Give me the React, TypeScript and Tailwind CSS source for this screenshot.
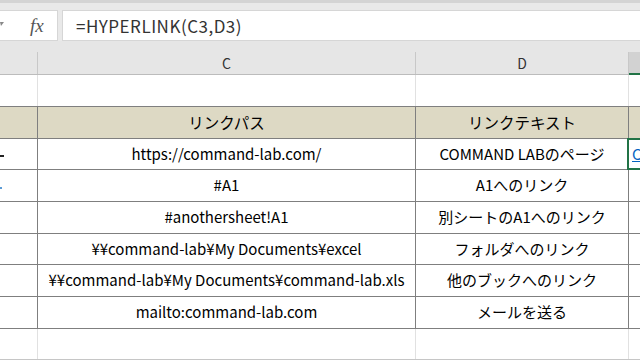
import React from "react";

const jp = "font-['Noto_Sans_CJK_JP',sans-serif]";

const rows = [
  { c: "https://command-lab.com/", d: "COMMAND LABのページ", h: "h-[31px]", mark: "dash", sel: true },
  { c: "#A1", d: "A1へのリンク", h: "h-[32px]", mark: "blue" },
  { c: "#anothersheet!A1", d: "別シートのA1へのリンク", h: "h-[32px]" },
  { c: "¥¥command-lab¥My Documents¥excel", d: "フォルダへのリンク", h: "h-[31px]" },
  { c: "¥¥command-lab¥My Documents¥command-lab.xls", d: "他のブックへのリンク", h: "h-[32px]" },
  { c: "mailto:command-lab.com", d: "メールを送る", h: "h-[32px]" },
];

export default function App() {
  return (
    <div className={`w-[640px] h-[360px] overflow-hidden bg-white ${jp} text-black`}>
      <div className="h-[3px] bg-[#d4d4d4]" />
      {/* formula bar */}
      <div className="h-[38px] bg-[#e9e9e9] flex items-start pt-[7px]">
        <div className="w-[58px] h-[31px] bg-white border border-l-0 border-[#d6d6d6] flex items-center">
          <svg width="4" height="6" viewBox="0 0 4 6" className="mt-[-4px]">
            <path d="M0 1 L4 1 L1 5 Z" fill="#888" />
          </svg>
          <span className="ml-[26px] font-['Liberation_Serif',serif] italic text-[19px] text-[#555] leading-none">
            fx
          </span>
        </div>
        <div className="ml-[4px] flex-1 h-[31px] bg-white border border-r-0 border-[#d6d6d6] flex items-center pl-[13px]">
          <span className="text-[17px] text-[#333] tracking-[0.5px]">=HYPERLINK(C3,D3)</span>
        </div>
      </div>
      <div className="h-[11px] bg-[#e6e6e6]" />
      {/* column headers */}
      <div className="flex h-[23px] bg-[#e6e6e6] border-b border-[#bcbcbc] text-[14px] text-[#333]">
        <div className="w-[38px] border-r border-[#c8c8c8]" />
        <div className="w-[378px] border-r border-[#c8c8c8] flex items-center justify-center">C</div>
        <div className="w-[213px] border-r border-[#c8c8c8] flex items-center justify-center">D</div>
        <div className="flex-1 min-w-0 bg-[#d2d2d2] border-b-2 border-[#217346] -mb-px" />
      </div>
      {/* row above table */}
      <div className="flex h-[32px] border-b border-[#7f7f7f]">
        <div className="w-[38px] border-r border-[#e1e1e1]" />
        <div className="w-[378px] border-r border-[#e1e1e1]" />
        <div className="w-[213px] border-r border-[#e1e1e1]" />
        <div className="flex-1 min-w-0" />
      </div>
      {/* table header */}
      <div className="flex h-[32px] bg-[#ddd9c4] border-b border-[#7f7f7f] text-[15.5px]">
        <div className="w-[38px] border-r border-[#7f7f7f]" />
        <div className="w-[378px] border-r border-[#7f7f7f] flex items-center justify-center">リンクパス</div>
        <div className="w-[213px] border-r border-[#7f7f7f] flex items-center justify-center">リンクテキスト</div>
        <div className="flex-1 min-w-0" />
      </div>
      {rows.map((r, i) => (
        <div key={i} className={`flex ${r.h} border-b border-[#7f7f7f] text-[15px]`}>
          <div className="w-[38px] shrink-0 border-r border-[#7f7f7f] flex items-center">
            {r.mark === "dash" && <span className="w-[4px] h-[2px] bg-[#222] mt-[4px]" />}
            {r.mark === "blue" && <span className="w-[2px] h-[2px] bg-[#5b9bd5] mt-[4px]" />}
          </div>
          <div className="w-[378px] shrink-0 border-r border-[#7f7f7f] flex items-center justify-center whitespace-nowrap">
            {r.c}
          </div>
          <div className="w-[213px] shrink-0 border-r border-[#7f7f7f] flex items-center justify-center whitespace-nowrap">
            {r.d}
          </div>
          <div className="flex-1 min-w-0 relative">
            {r.sel && (
              <>
                <div className="absolute -top-px -left-[2px] -bottom-px right-0 border-2 border-r-0 border-[#217346]" />
                <div className="h-full flex items-center pl-[3px] overflow-hidden">
                  <span className="text-[#0563c1] underline whitespace-nowrap">C</span>
                </div>
              </>
            )}
          </div>
        </div>
      ))}
      {/* empty row below */}
      <div className="flex h-[31px] border-b border-[#c6c6c6]">
        <div className="w-[38px] border-r border-[#e1e1e1]" />
        <div className="w-[378px] border-r border-[#e1e1e1]" />
        <div className="w-[213px] border-r border-[#e1e1e1]" />
        <div className="flex-1 min-w-0" />
      </div>
    </div>
  );
}
